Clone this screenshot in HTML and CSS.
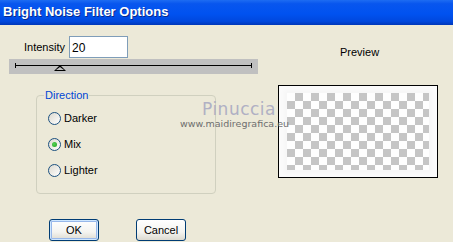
FILE: index.html
```html
<!DOCTYPE html>
<html lang="en">
<head>
  <meta charset="UTF-8" />
  <title>Bright Noise Filter Options</title>
  <link rel="stylesheet" href="styles.css">
</head>
<body>
  <div class="window">
    <div class="titlebar">Bright Noise Filter Options</div>
    <div class="content">
      <div class="left">
        <div class="intensity">
          <label for="intensity">Intensity</label>
          <input type="text" id="intensity" value="20" />
        </div>
        <div class="slider">
          <div class="track"></div>
          <div class="thumb"></div>
        </div>
        <fieldset class="group">
          <legend>Direction</legend>
          <div class="radio"><span class="dot"></span>Darker</div>
          <div class="radio"><span class="dot checked"></span>Mix</div>
          <div class="radio"><span class="dot"></span>Lighter</div>
        </fieldset>
        <div class="buttons">
          <button class="default">OK</button>
          <button>Cancel</button>
        </div>
      </div>
      <div class="right">
        <div class="preview-label">Preview</div>
        <div class="preview">
          <div class="checker"></div>
        </div>
      </div>
    </div>
    <div class="watermark">
      <div class="name">Pinuccia</div>
      <div class="url">www.maidiregrafica.eu</div>
    </div>
  </div>
</body>
</html>
```

FILE: styles.css
```css
* {
  box-sizing: border-box;
}

body {
  margin: 0;
  background: #ece9d8;
  font-family: 'Liberation Sans', Arial, sans-serif;
  font-size: 11px;
  color: #000;
}

.window {
  position: relative;
  width: 453px;
  height: 242px;
  overflow: hidden;
}

.titlebar {
  height: 25px;
  padding: 4px 0 0 3px;
  color: #fff;
  font-size: 13px;
  font-weight: bold;
  background: linear-gradient(180deg, #1d6cf2 0%, #0856ee 15%, #0052f0 55%, #0048de 85%, #0037b8 100%);
  text-shadow: 1px 1px 0 #0a2a8a;
}

.content {
  display: flex;
}

.left {
  width: 270px;
}

.intensity {
  display: flex;
  align-items: center;
  margin-top: 11px;
  padding-left: 24px;
  height: 22px;
}

.intensity label {
  width: 45px;
  font-size: 11px;
}

.intensity input {
  width: 59px;
  height: 22px;
  border: 1px solid #7f9db9;
  padding: 1px 2px 0;
  font-family: 'Liberation Sans', Arial, sans-serif;
  font-size: 12px;
  outline: none;
}

.slider {
  position: relative;
  margin: 1px 0 0 9px;
  width: 249px;
  height: 15px;
  background: #c0c0c0;
}

.track {
  position: absolute;
  left: 6px;
  right: 6px;
  top: 6px;
  height: 1px;
  background: #000;
}

.track::before,
.track::after {
  content: "";
  position: absolute;
  top: -2px;
  width: 1px;
  height: 5px;
  background: #000;
}

.track::before {
  left: 0;
}

.track::after {
  right: 0;
}

.thumb {
  position: absolute;
  left: 45px;
  top: 6px;
  width: 0;
  height: 0;
  border-left: 6px solid transparent;
  border-right: 6px solid transparent;
  border-bottom: 6px solid #000;
}

.thumb::after {
  content: "";
  position: absolute;
  left: -4px;
  top: 2px;
  border-left: 4px solid transparent;
  border-right: 4px solid transparent;
  border-bottom: 3px solid #c0c0c0;
}

.group {
  margin: 14px 0 0 36px;
  width: 180px;
  padding: 0 0 10px 7px;
  border: 1px solid #d0d0bf;
  border-radius: 4px;
}

.group legend {
  padding: 0 1px;
  color: #0046d5;
  line-height: 14px;
}

.radio {
  display: flex;
  align-items: center;
  height: 26px;
  padding-left: 4px;
}

.radio:first-of-type {
  margin-top: 3px;
}

.dot {
  width: 13px;
  height: 13px;
  margin-right: 3px;
  border: 1px solid #1c5180;
  border-radius: 50%;
  background: linear-gradient(135deg, #dcd9cf, #fff);
  display: flex;
  align-items: center;
  justify-content: center;
}

.dot.checked::after {
  content: "";
  width: 5px;
  height: 5px;
  border-radius: 50%;
  background: radial-gradient(circle at 40% 40%, #55d255, #21a121);
}

.buttons {
  display: flex;
  gap: 37px;
  margin: 25px 0 0 49px;
}

.buttons button {
  width: 50px;
  height: 22px;
  padding: 0;
  border: 1px solid #003c74;
  border-radius: 3px;
  background: linear-gradient(180deg, #fff 0%, #f4f4f0 60%, #dcdad0 100%);
  font-family: 'Liberation Sans', Arial, sans-serif;
  font-size: 11px;
  color: #000;
}

.buttons button.default {
  box-shadow: inset 0 0 0 1px #cee7ff, inset 0 0 0 2px #98b8ea;
}

.right {
  width: 183px;
  padding-left: 8px;
}

.preview-label {
  margin-top: 21px;
  padding-left: 62px;
  height: 14px;
}

.preview {
  margin-top: 25px;
  width: 160px;
  height: 93px;
  border: 1px solid #000;
  background: #fbfbfb;
  padding: 7px 8px;
}

.checker {
  width: 100%;
  height: 100%;
  background-color: #fff;
  background-image:
    linear-gradient(45deg, #c3c3c3 25%, transparent 25%, transparent 75%, #c3c3c3 75%),
    linear-gradient(45deg, #c3c3c3 25%, transparent 25%, transparent 75%, #c3c3c3 75%);
  background-size: 16px 16px;
  background-position: 0 0, 8px 8px;
  box-shadow: 0 0 4px 3px #f6f6f6;
  opacity: 0.95;
}

.watermark {
  position: absolute;
  left: 180px;
  top: 99px;
  text-align: center;
}

.watermark .name {
  font-family: 'DejaVu Sans', sans-serif;
  font-size: 17px;
  letter-spacing: 0.5px;
  color: #b0b0c4;
  padding-left: 22px;
  text-align: left;
}

.watermark .url {
  font-family: 'DejaVu Sans', sans-serif;
  font-size: 9.5px;
  color: #6e6e6e;
  margin-top: -1px;
}
```
